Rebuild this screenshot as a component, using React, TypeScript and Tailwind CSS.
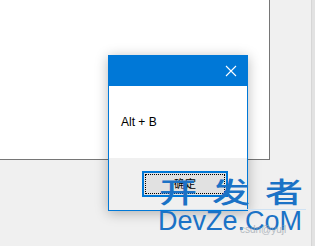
export default function App() {
  return (
    <div className="relative w-[315px] h-[246px] overflow-hidden bg-[#f0f0f0] font-['Liberation_Sans','Noto_Sans_CJK_SC',sans-serif]">
      <div className="flex">
        <div className="w-[270px] h-[160px] bg-white border-r border-b border-[#767676]" />
        <div className="flex-1" />
        <div className="w-[4px] h-[246px] bg-[#e2e2e2] border-l border-[#d6d6d6]" />
      </div>

      {/* message box */}
      <div className="absolute left-[108px] top-[55px] w-[140px] h-[156px] border border-[#0078d7] bg-[#f0f0f0] flex flex-col shadow-[0_2px_12px_rgba(0,0,0,0.28)]">
        <div className="h-[30px] bg-[#0078d7] flex items-center justify-end pr-[9px]">
          <svg width="12" height="12" viewBox="0 0 12 12" className="mr-[1px]">
            <path d="M1 1 L11 11 M11 1 L1 11" stroke="#fff" strokeWidth="1.1" />
          </svg>
        </div>
        <div className="h-[72px] bg-white flex items-center pl-[12px] text-[12px] text-black">
          Alt + B
        </div>
        <div className="flex-1 flex justify-end items-start pt-[13px] pr-[19px]">
          <div className="w-[86px] h-[26px] border-2 border-[#0078d7] bg-[#e1e1e1] p-px">
            <div className="w-full h-full border border-dotted border-black flex items-center justify-center text-[11px] text-black leading-none">
              确定
            </div>
          </div>
        </div>
      </div>

      {/* watermark */}
      <div className="absolute left-[159px] top-[177px] text-[38px] leading-none tracking-[15px] font-medium text-[#1b72c6] font-['Noto_Sans_CJK_SC',sans-serif] scale-y-[0.75] origin-top-left whitespace-nowrap">
        开发者
      </div>
      <div className="absolute left-[160px] top-[209px] w-[146px] h-px bg-[#cfe2f3]" />
      <div className="absolute left-[158px] top-[208px] text-[27px] leading-none text-[#1b72c6] font-['Liberation_Sans',sans-serif] whitespace-nowrap">
        DevZe.CoM
      </div>
      <div className="absolute left-[240px] top-[225px] text-[10px] leading-none text-[#9aa4ad] opacity-70 whitespace-nowrap">
        csdn@yujl
      </div>
    </div>
  );
}
